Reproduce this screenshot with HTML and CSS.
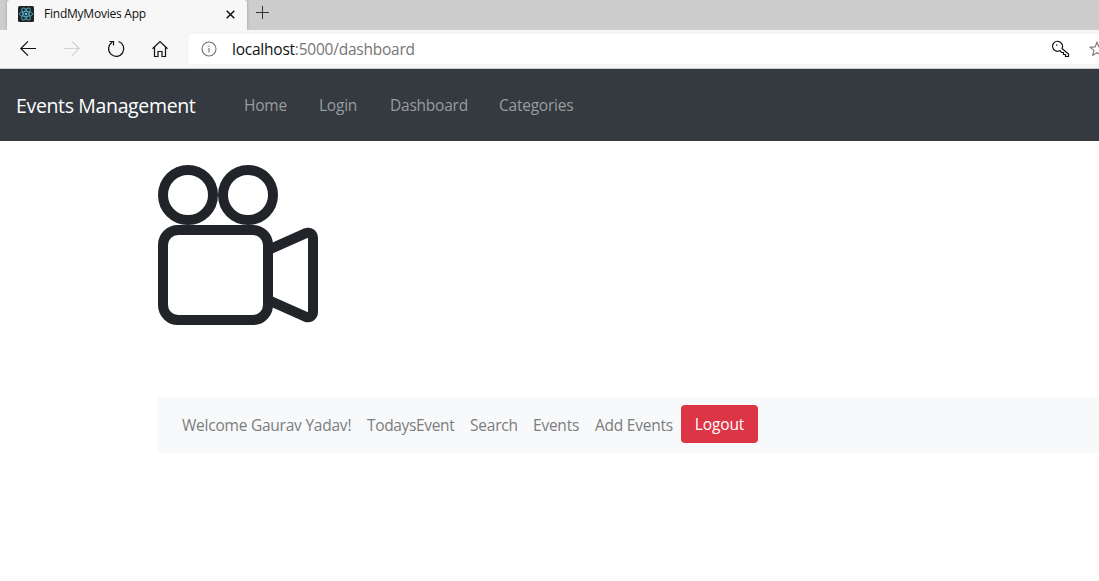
FILE: index.html
```html
<!DOCTYPE html>
<html lang="en">
<head>
<meta charset="utf-8">
<title>FindMyMovies App</title>
<link rel="stylesheet" href="styles.css">
</head>
<body>
<div class="tabs">
  <div class="tab">
    <svg class="favicon" width="16" height="16" viewBox="0 0 16 16"><rect width="16" height="16" rx="1.5" fill="#222"/><g fill="none" stroke="#48a9c5" stroke-width=".9"><ellipse cx="8" cy="8" rx="6.7" ry="2.6"/><ellipse cx="8" cy="8" rx="6.7" ry="2.6" transform="rotate(60 8 8)"/><ellipse cx="8" cy="8" rx="6.7" ry="2.6" transform="rotate(120 8 8)"/></g><circle cx="8" cy="8" r="1.3" fill="#61c8e8"/></svg>
    <span class="tab-title">FindMyMovies App</span>
    <svg class="close" width="9" height="9" viewBox="0 0 9 9"><path d="M.7.7l7.6 7.6M8.3.7L.7 8.3" stroke="#111" stroke-width="1.5"/></svg>
  </div>
  <svg class="plus" width="13" height="13" viewBox="0 0 13 13"><path d="M6.5 0v13M0 6.5h13" stroke="#333"/></svg>
</div>
<div class="toolbar">
  <svg width="184" height="38" viewBox="0 0 184 38" fill="none" stroke="#111" stroke-width="1.2">
    <path d="M36 18.5H21M28 11.3l-7.2 7.2 7.2 7.2"/>
    <path stroke="#d2d2d2" d="M64 18.5h15M72 11.3l7.2 7.2-7.2 7.2"/>
    <path d="M118.5 11.5a7.6 7.6 0 1 1-6.300.8M109.500 11.500h4v4"/>
    <path d="M152.5 18.8l7.5-7.3 7.5 7.3M154.5 17v9.5h3.500v-5h4v5h3.500V17"/>
  </svg>
  <div class="address">
    <svg class="info" width="16" height="16" viewBox="0 0 16 16"><circle cx="8" cy="8" r="7" fill="none" stroke="#707070" stroke-width="1.1"/><path d="M8 7v4.500M8 4.500v1.200" stroke="#707070" stroke-width="1.1"/></svg>
    <span class="url"><span class="host">localhost</span>:5000/dashboard</span>
    <svg class="key" width="18" height="18" viewBox="0 0 18 18" fill="none" stroke="#111" stroke-width="1.2"><path d="M10 8.500L16.500 14V16.500H13.500V14.500H11.500V12.500H9.500L8 10.600A5 5 0 1 1 10 8.500Z"/><circle cx="4.700" cy="5" r=".8" fill="#111" stroke="none"/></svg>
    <svg class="star" width="16" height="16" viewBox="0 0 16 16"><path d="M8 1.200l1.900 4.700 5 .3-3.900 3.200 1.300 5L8 11.700l-4.300 2.700 1.300-5L1.100 6.200l5-.3z" fill="none" stroke="#777" stroke-width="1.100"/></svg>
  </div>
</div>
<nav class="navbar">
  <span class="brand">Events Management</span>
  <span class="nav-link home">Home</span>
  <span class="nav-link login">Login</span>
  <span class="nav-link dash">Dashboard</span>
  <span class="nav-link cats">Categories</span>
</nav>
<main class="content">
  <svg class="camera" width="160" height="160" viewBox="0 0 160 160" fill="none" stroke="#212529" stroke-width="10">
    <circle cx="30" cy="30" r="25"/><circle cx="90" cy="30" r="25"/>
    <rect x="5" y="65" width="105" height="90" rx="15"/>
    <path fill="#212529" stroke="none" d="M114 77.800L145.900 63.600A10 10 0 0 1 160 72.700V147.300A10 10 0 0 1 145.900 156.400L114 142.200V131.300L150 147.300V72.700L114 88.700Z"/>
  </svg>
  <nav class="subnav">
    <span class="sub-link welcome">Welcome Gaurav Yadav!</span>
    <span class="sub-link today">TodaysEvent</span>
    <span class="sub-link search">Search</span>
    <span class="sub-link events">Events</span>
    <span class="sub-link add">Add Events</span>
    <button class="logout">Logout</button>
  </nav>
</main>
</body>
</html>
```
FILE: styles.css
```css
* { box-sizing: border-box; }
body { margin: 0; width: 1099px; height: 581px; overflow: hidden; background: #fff; font-family: "Open Sans", "Noto Sans", sans-serif; font-size: 15.5px; letter-spacing: -.23px; }
svg { display: block; flex: none; }
span { white-space: nowrap; }
.tabs { display: flex; height: 30px; background: #cdcdcd; padding-left: 7px; }
.tab { display: flex; align-items: center; width: 240px; height: 30px; padding: 0 12px 2px 11px; background: #f7f7f7; border-radius: 3px 3px 0 0; box-shadow: 0 0 3px #999; }
.tab-title { flex: 1; margin: -2px 0 0 10px; font-size: 12px; letter-spacing: -.23px; color: #111; }
.plus { margin: 6px 0 0 9px; }
.toolbar { position: relative; display: flex; height: 39px; background: #f7f7f7; border-bottom: 1px solid #ccc; }
.address { flex: 1; display: flex; align-items: center; height: 30px; margin: 4px 0 0 4px; background: #fff; border-radius: 4px 0 0 4px; box-shadow: 0 0 2px #e8e8e8; overflow: hidden; }
.info { margin: -1px 0 0 13px; }
.url { width: 183px; margin-left: 15px; color: #767676; }
.host { color: #111; }
.key { margin-left: auto; }
.star { margin: 0 -6px 0 19px; }
.navbar { display: flex; align-items: center; height: 72px; padding: 0 16px; background: #343a40; color: #999c9f; }
.brand { width: 180px; margin: 1px 48px 0 0; color: #fff; font-size: 19.5px; letter-spacing: -.35px; }
.nav-link { margin-right: 32px; }
.home { width: 43px; }
.login { width: 39px; }
.dash { width: 77px; }
.cats { width: 76px; }
.content { padding: 24px 0 0 158px; }
.subnav { display: flex; align-items: center; height: 56px; margin-top: 72px; padding-left: 24px; background: #f8f9fa; color: #7c7d7d; }
.sub-link { margin-right: 16px; }
.welcome { width: 169px; }
.today { width: 87px; letter-spacing: -.35px; }
.search { width: 47px; }
.events { width: 46px; }
.add { width: 78px; margin-right: 8px; }
.logout { width: 77px; height: 38px; margin-bottom: 2px; padding: 0; border: 0; border-radius: 4px; background: #dc3545; color: #fff; font: inherit; letter-spacing: -.1px; }
```
